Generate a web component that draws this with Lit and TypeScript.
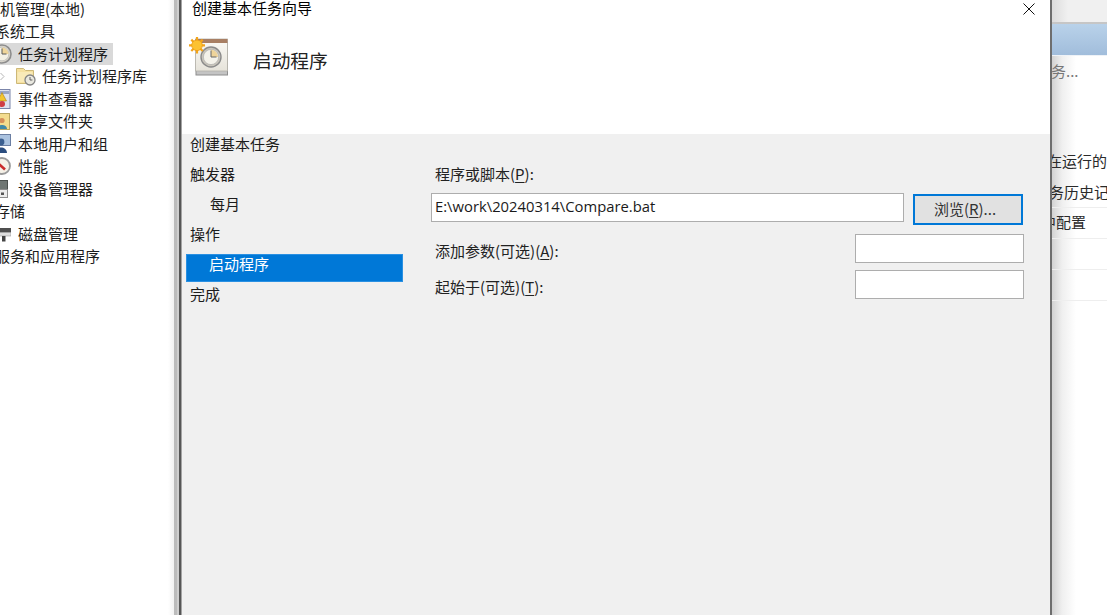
import { LitElement, html, css, svg } from "lit";
import { customElement } from "lit/decorators.js";

const clockIcon = svg`<svg class="ic" width="20" height="20" viewBox="0 0 20 20">
  <circle cx="10" cy="10" r="9" fill="#d9d5cb" stroke="#8d8d8d" stroke-width="1.6"/>
  <circle cx="10" cy="10" r="6.8" fill="#f4f1e6" stroke="#b3b3b3" stroke-width=".6"/>
  <path d="M10 10V3.5A6.5 6.5 0 0 1 16.5 10Z" fill="#efd59a"/>
  <path d="M10 4.5V10H14.5" fill="none" stroke="#5a5a5a" stroke-width="1"/>
</svg>`;

const folderIcon = svg`<svg class="ic" width="20" height="20" viewBox="0 0 20 20">
  <path d="M.5 2.5h7l2 2h8v13H.5Z" fill="#f6e1a0" stroke="#cdb878"/>
  <path d="M1.5 6h15v10h-15Z" fill="#f9eab8"/>
  <circle cx="14" cy="14" r="5" fill="#e9e8e0" stroke="#848484" stroke-width="1.3"/>
  <path d="M14 11v3h2.4" fill="none" stroke="#555" stroke-width=".9"/>
</svg>`;

const icons: Record<string, unknown> = {
  event: svg`<svg class="ic" width="18" height="20" viewBox="0 0 18 20">
    <rect x=".5" y=".5" width="16.5" height="19" fill="#dde2ef" stroke="#7b85aa"/>
    <rect x="2" y="2" width="14" height="3" fill="#9aa6c6"/>
    <path d="M9 3.5l4.5 8.5h-9Z" fill="#f3c52f" stroke="#a77f12" stroke-width=".6"/>
    <circle cx="9" cy="15" r="3" fill="#cf3d45"/></svg>`,
  share: svg`<svg class="ic" width="18" height="18" viewBox="0 0 18 18">
    <rect x=".5" y="1.5" width="16" height="16" fill="#f3dc8e" stroke="#b9a662"/>
    <circle cx="9" cy="8.5" r="2.6" fill="#d58f5a"/>
    <path d="M4 17c0-5.5 10-5.500 10 0Z" fill="#3f88a8"/></svg>`,
  users: svg`<svg class="ic" width="18" height="20" viewBox="0 0 18 20">
    <rect x="3.500" y=".5" width="14" height="11" fill="#aac2df" stroke="#6a7ea2"/>
    <circle cx="8" cy="8" r="3.400" fill="#3b5f90"/>
    <path d="M2 19c0-7.500 12-7.500 12 0Z" fill="#2a4c7e"/></svg>`,
  perf: svg`<svg class="ic" width="18" height="18" viewBox="0 0 18 18">
    <circle cx="9" cy="9" r="8" fill="#f5f1e7" stroke="#9b9b9b" stroke-width="1.8"/>
    <path d="M3.500 5L12 12.500" stroke="#c92b2b" stroke-width="2.600"/></svg>`,
  dev: svg`<svg class="ic" width="18" height="18" viewBox="0 0 18 18">
    <rect x="4.500" y=".5" width="10" height="9" fill="#6f7673" stroke="#4a4f4d"/>
    <rect x="4.500" y="9.500" width="10" height="8" fill="#ececec" stroke="#8d8d8d"/>
    <rect x="8" y="12.500" width="3" height="2.500" fill="#555"/></svg>`,
  disk: svg`<svg class="ic" width="18" height="18" viewBox="0 0 18 18">
    <rect x="4" y="3" width="14" height="4.500" fill="#4f4f4f"/>
    <rect x="4" y="7.500" width="14" height="3.500" fill="#dedede" stroke="#8a8a8a" stroke-width=".5"/>
    <rect x="9" y="11" width="3.500" height="5.500" fill="#444"/></svg>`,
};

const taskIcon = svg`<svg class="ic" width="40" height="39" viewBox="0 0 40 39">
  <defs>
    <linearGradient id="pg" x1="0" y1="0" x2="0" y2="1"><stop offset="0" stop-color="#fbfaf6"/><stop offset="1" stop-color="#e6e3da"/></linearGradient>
  </defs>
  <rect x="7" y="5" width="31.500" height="33" fill="#c4c4c4" stroke="#8e8e8e"/>
  <rect x="6.500" y="2" width="32" height="32" fill="url(#pg)" stroke="#b5b2aa" stroke-width=".8"/>
  <rect x="6.500" y="2" width="32" height="4" fill="#a87f64"/>
  <circle cx="22" cy="20" r="10" fill="#c9c5bb" stroke="#8b8b8b" stroke-width="1.400"/>
  <circle cx="22" cy="20" r="7.600" fill="#f4f2ea" stroke="#a9a9a9" stroke-width=".6"/>
  <path d="M22 20V12.800A7.200 7.200 0 0 1 29.200 20Z" fill="#efd49a"/>
  <path d="M22 13.500V20H27.500" fill="none" stroke="#666" stroke-width="1"/>
  <g stroke="#f2a41a" stroke-width="2.200">
    <path d="M8 0V16.500M0 8.300H16M2.300 2.600L13.700 14M13.700 2.600L2.300 14"/>
  </g>
  <circle cx="8" cy="8.300" r="5.300" fill="#fcc232" stroke="#ee9a12" stroke-width=".8"/>
</svg>`;

const closeIcon = svg`<svg class="close" width="12" height="12" viewBox="0 0 12 12"><path d="M.5.5L11.500 11.500M11.500.5L.5 11.500" stroke="#111" stroke-width="1" fill="none"/></svg>`;

const chevron = svg`<svg class="chev" width="5" height="9" viewBox="0 0 5 9"><path d="M.5 1L4 4.500L.5 8" stroke="#b4b4b4" fill="none" stroke-width="1"/></svg>`;

@customElement("app-root")
export class AppRoot extends LitElement {
  static styles = css`
    :host {
      display: block;
      width: 1107px;
      height: 615px;
      overflow: hidden;
      background: #fff;
      font-family: "Noto Sans CJK SC", "Noto Sans", sans-serif;
      font-size: 15px;
      color: #1c1c1c;
    }
    .page { display: grid; grid-template-columns: 174px 8px 870px 55px; height: 615px; }
    .ic { flex: none; display: block; }

    .tree {
      overflow: hidden; display: flex; flex-direction: column; margin-top: -2.5px;
      background: linear-gradient(90deg, #fff 168px, #f2f2f2 174px);
    }
    .row { height: 22.5px; line-height: 22.5px; white-space: nowrap; display: flex; align-items: center; flex: none; }
    .root { padding-left: 0; }
    .top { margin-left: -5px; }
    .item { margin-left: -7px; gap: 7px; }
    .sel { background: #d9d9d9; width: 113px; margin-left: 0; }
    .sel .ic { margin-left: -8px; margin-right: 6px; }
    .sub .chev { margin-left: 0; margin-right: 11px; }
    .sub .ic:nth-of-type(2) { margin-right: 6px; }

    .strip { display: grid; grid-template-columns: 3px 2px 2px 1px; }
    .strip i:nth-child(1) { background: #bcbcbc; }
    .strip i:nth-child(2) { background: #cfcfcf; }
    .strip i:nth-child(3) { background: #565656; }
    .strip i:nth-child(4) { background: #a4a4a4; }

    .dialog { display: flex; flex-direction: column; background: #f0f0f0; border-right: 2px solid #6e6e6e; box-sizing: border-box; }
    .head { background: #fff; height: 134px; flex: none; }
    .titlebar { display: flex; justify-content: space-between; height: 17px; }
    .title { line-height: 15px; padding-left: 10px; color: #000; }
    .close { margin: 3px 15px 0 0; display: block; }
    .banner { display: flex; margin-top: 20px; padding-left: 7px; }
    .banner-text { font-size: 18.7px; margin: 10px 0 0 24px; line-height: 26px; color: #222; }

    .body { flex: 1; display: flex; }
    .nav { width: 222px; flex: none; padding-left: 4px; box-sizing: border-box; display: flex; flex-direction: column; }
    .nav-h { height: 22px; line-height: 20px; padding-left: 4px; margin-bottom: 4px; }
    .nav-row { height: 30px; line-height: 28px; padding-left: 4px; flex: none; }
    .nav-row.in { padding-left: 24px; }
    .nav-row.active {
      background: #0078d7; color: #fff; width: 217px; height: 28px; line-height: 18px;
      margin: 4px 0 -2px; padding-left: 22px; box-sizing: border-box; border: 1px solid #2a90e2;
    }

    .form { flex: 1; padding: 30px 26px 0 27px; display: flex; flex-direction: column; }
    .lab { height: 22px; line-height: 20px; padding-left: 4px; color: #222; white-space: nowrap; }
    u { text-underline-offset: 2px; }
    .script-row { display: flex; gap: 9px; margin-top: 7px; align-items: flex-start; }
    .input { box-sizing: border-box; background: #fff; border: 1px solid #adadad; height: 29px; line-height: 25px; padding-left: 3px; }
    .script { width: 473px; font-family: "Open Sans", "Noto Sans", sans-serif; font-size: 14.8px; color: #1a1a1a; }
    .btn {
      box-sizing: border-box; width: 110px; height: 31px; margin-top: 1px; padding-right: 6px;
      background: #e1e1e1; border: 2px solid #0078d7; text-align: center; line-height: 25px; color: #333;
    }
    .args { display: flex; flex-direction: column; gap: 7px; margin-top: 9px; }
    .arg { display: flex; justify-content: space-between; }
    .arg .lab { padding-top: 7px; }
    .arg .input { width: 169px; }

    .right {
      display: flex; flex-direction: column; overflow: hidden; color: #2a2a2a;
      background: linear-gradient(90deg, #d2d2d2 0, #efefef 10px, #fff 24px);
    }
    .r-top { height: 24px; flex: none; box-sizing: border-box; border-bottom: 2px solid #c6c6c6; background: linear-gradient(90deg, #dcdcdc, #f0f0f0 16px); }
    .r-blue { height: 32px; flex: none; background: linear-gradient(180deg, #b9d2ea, #a1bddb); border-bottom: 1px solid #eef2f7; box-sizing: border-box; }
    .r-more { height: 22px; line-height: 20px; margin-top: 5px; color: #777; white-space: nowrap; flex: none; margin-left: -1px; }
    .r-list { margin-top: 63px; display: flex; flex-direction: column; }
    .r-row { height: 31px; box-sizing: border-box; line-height: 30px; white-space: nowrap; flex: none; border-bottom: 1px solid #eeeeee; }
    .r-plain { border-bottom: none; }
    .r-tight { line-height: 28px; }
    .c1 { margin-left: -5px; }
    .c2 { margin-left: -3px; }
    .c3 { margin-left: -11px; }
  `;

  private treeItem(ic: string, label: string) {
    return html`<div class="row item">${icons[ic]}<span>${label}</span></div>`;
  }

  render() {
    return html`<div class="page">
      <div class="tree">
        <div class="row root">机管理(本地)</div>
        <div class="row top">系统工具</div>
        <div class="row sel">${clockIcon}任务计划程序</div>
        <div class="row sub">${chevron}${folderIcon}任务计划程序库</div>
        ${this.treeItem("event", "事件查看器")}
        ${this.treeItem("share", "共享文件夹")}
        ${this.treeItem("users", "本地用户和组")}
        ${this.treeItem("perf", "性能")}
        ${this.treeItem("dev", "设备管理器")}
        <div class="row top">存储</div>
        ${this.treeItem("disk", "磁盘管理")}
        <div class="row top">服务和应用程序</div>
      </div>
      <div class="strip"><i></i><i></i><i></i><i></i></div>
      <div class="dialog">
        <div class="head">
          <div class="titlebar"><span class="title">创建基本任务向导</span>${closeIcon}</div>
          <div class="banner">${taskIcon}<span class="banner-text">启动程序</span></div>
        </div>
        <div class="body">
          <div class="nav">
            <div class="nav-h">创建基本任务</div>
            <div class="nav-row">触发器</div>
            <div class="nav-row in">每月</div>
            <div class="nav-row">操作</div>
            <div class="nav-row active">启动程序</div>
            <div class="nav-row">完成</div>
          </div>
          <div class="form">
            <div class="lab">程序或脚本(<u>P</u>):</div>
            <div class="script-row">
              <div class="input script">E:\\work\\20240314\\Compare.bat</div>
              <div class="btn">浏览(<u>R</u>)...</div>
            </div>
            <div class="args">
              <div class="arg"><div class="lab">添加参数(可选)(<u>A</u>):</div><div class="input"></div></div>
              <div class="arg"><div class="lab">起始于(可选)(<u>T</u>):</div><div class="input"></div></div>
            </div>
          </div>
        </div>
      </div>
      <div class="right">
        <div class="r-top"></div>
        <div class="r-blue"></div>
        <div class="r-more">务...</div>
        <div class="r-list">
          <div class="r-row r-plain"><span class="c1">在运行的</span></div>
          <div class="r-row"><span class="c2">务历史记</span></div>
          <div class="r-row r-tight"><span class="c3">中配置</span></div>
          <div class="r-row"></div>
          <div class="r-row"></div>
        </div>
      </div>
    </div>`;
  }
}
